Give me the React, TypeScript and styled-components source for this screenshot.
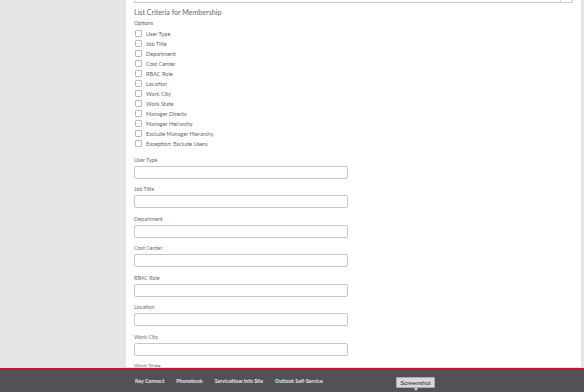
import React from "react";
import styled, { createGlobalStyle } from "styled-components";

const GlobalStyle = createGlobalStyle`
  html, body { margin: 0; padding: 0; }
  body {
    width: 584px;
    height: 392px;
    overflow: hidden;
    font-family: Lato, "Liberation Sans", sans-serif;
    background: #ffffff;
  }
  * { box-sizing: border-box; }
`;

const Page = styled.div`
  width: 584px;
  height: 392px;
  display: grid;
  grid-template-rows: 367px 1px 2px 22px;
  position: relative;
`;

const Main = styled.div`
  display: flex;
  overflow: hidden;
`;

const SidePanel = styled.div`
  width: 126px;
  flex: none;
  background: #e4e5e7;
`;

const Content = styled.div`
  flex: 1;
  background: #ffffff;
  padding: 0 8px 0 8px;
  overflow: hidden;
`;

const ScrollStrip = styled.div`
  width: 3px;
  flex: none;
  background: #e6e6e6;
`;

const TopRow = styled.div`
  display: flex;
  height: 3px;
  width: 439px;
`;

const TopField = styled.div`
  flex: 1;
  border: 1px solid #cfcfcf;
  border-top: none;
`;

const TopButton = styled.div`
  width: 12px;
  border: 1px solid #cfcfcf;
  border-top: none;
  border-left: none;
`;

const Title = styled.h2`
  margin: 4px 0 0 0;
  font-size: 7.1px;
  line-height: 12px;
  font-weight: 400;
  color: #66696d;
`;

const SmallLabel = styled.div`
  font-size: 5.4px;
  line-height: 8px;
  color: #63666a;
`;

const CheckList = styled.div`
  margin-top: 1px;
  display: flex;
  flex-direction: column;
`;

const CheckRow = styled.label`
  display: flex;
  align-items: center;
  height: 10px;
  gap: 4px;
  padding-left: 1px;
  font-size: 5.6px;
  color: #63666a;
`;

const Box = styled.span`
  width: 7px;
  height: 7px;
  flex: none;
  border: 1px solid #b8b8b8;
  border-radius: 1px;
  background: #fff;
`;

const Fields = styled.div`
  margin-top: 7.5px;
  display: flex;
  flex-direction: column;
`;

const FieldGroup = styled.div`
  display: flex;
  flex-direction: column;
  margin-bottom: 6.5px;
`;

const FieldLabel = styled.div`
  font-size: 5.4px;
  line-height: 8px;
  color: #6a6d71;
  margin-bottom: 2px;
`;

const Input = styled.div`
  width: 214px;
  height: 13px;
  border: 1px solid #c6c6c6;
  border-radius: 2px;
  background: #fff;
`;

const ThinLine = styled.div`
  background: #e2e2e2;
`;

const RedLine = styled.div`
  background: #c8102e;
`;

const Footer = styled.footer`
  background: #505256;
  display: flex;
  align-items: center;
  gap: 12px;
  padding-left: 135px;
`;

const FooterLink = styled.a`
  font-size: 5.2px;
  font-weight: 700;
  color: #e8e8ea;
  text-decoration: none;
`;

const Tooltip = styled.div`
  position: absolute;
  left: 396px;
  top: 377px;
  width: 39px;
  height: 11px;
  background: #d7d8dc;
  border: 1px solid #a9abb0;
  border-radius: 1px;
  display: flex;
  align-items: center;
  justify-content: center;
  font-family: "Liberation Sans", Arial, sans-serif;
  font-size: 6px;
  color: #222;
  &::after {
    content: "";
    position: absolute;
    left: 17px;
    bottom: -4px;
    border-left: 2.5px solid transparent;
    border-right: 2.5px solid transparent;
    border-top: 3px solid #d7d8dc;
  }
`;

const options = [
  "User Type",
  "Job Title",
  "Department",
  "Cost Center",
  "RBAC Role",
  "Location",
  "Work City",
  "Work State",
  "Manager Directs",
  "Manager Heirarchy",
  "Exclude Manager Hierarchy",
  "Exception: Exclude Users",
];

const fields = [
  "User Type",
  "Job Title",
  "Department",
  "Cost Center",
  "RBAC Role",
  "Location",
  "Work City",
  "Work State",
];

const links = ["Key Connect", "Phonebook", "ServiceNow Info Site", "Outlook Self-Service"];

export default function App() {
  return (
    <>
      <GlobalStyle />
      <Page>
        <Main>
          <SidePanel />
          <Content>
            <TopRow>
              <TopField />
              <TopButton />
            </TopRow>
            <Title>List Criteria for Membership</Title>
            <SmallLabel>Options</SmallLabel>
            <CheckList>
              {options.map((o) => (
                <CheckRow key={o}>
                  <Box />
                  {o}
                </CheckRow>
              ))}
            </CheckList>
            <Fields>
              {fields.map((f) => (
                <FieldGroup key={f}>
                  <FieldLabel>{f}</FieldLabel>
                  <Input />
                </FieldGroup>
              ))}
            </Fields>
          </Content>
          <ScrollStrip />
        </Main>
        <ThinLine />
        <RedLine />
        <Footer>
          {links.map((l) => (
            <FooterLink key={l}>{l}</FooterLink>
          ))}
        </Footer>
        <Tooltip>Screenshot</Tooltip>
      </Page>
    </>
  );
}
